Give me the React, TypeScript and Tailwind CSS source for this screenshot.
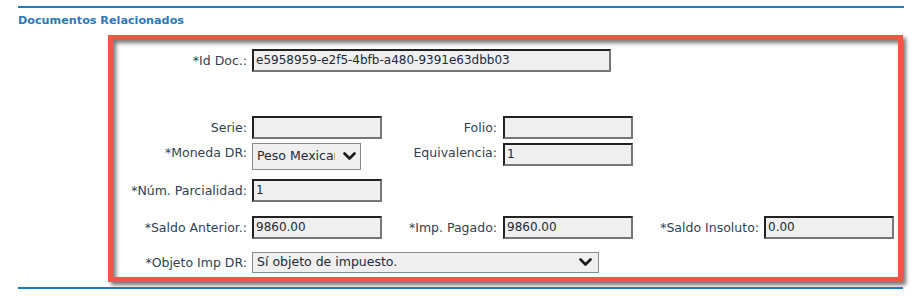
import React from "react";

const Label = ({ children, pr = "pr-[5px]" }: { children: React.ReactNode; pr?: string }) => (
  <div className={`text-right ${pr} text-[12.5px] leading-[14px] text-[#2f3f52] whitespace-nowrap`}>{children}</div>
);

const Input = ({ value = "", w = "w-[130px]" }: { value?: string; w?: string }) => (
  <div
    className={`${w} h-[23px] bg-[#efefef] border-2 border-t-[#222] border-l-[#222] border-r-[#767676] border-b-[#767676] text-[12px] leading-[19px] text-[#1d2a38] pl-[2px] whitespace-nowrap overflow-hidden`}
  >
    {value}
  </div>
);

const Chevron = () => (
  <svg width="13" height="9" viewBox="0 0 13 9" className="shrink-0">
    <polyline points="1.5,1.5 6.5,6.5 11.5,1.5" fill="none" stroke="#1a1a1a" strokeWidth="2.6" strokeLinecap="round" strokeLinejoin="round" />
  </svg>
);

const COLS = "grid grid-cols-[139px_130px_121px_130px_131px_130px] items-center";

export default function App() {
  return (
    <div className="w-[921px] h-[296px] bg-white overflow-hidden font-['DejaVu_Sans',sans-serif]">
      <div className="ml-[18px] w-[886px] pt-[6px]">
        <div className="h-[2px] bg-[#1a7cc1]" />
        <div className="mt-[6px] text-[11.2px] font-bold leading-[14px] text-[#2a7ab6]">Documentos Relacionados</div>
      </div>

      <div className="ml-[108px] mt-[7px] w-[795px] h-[247px] border-[5px] border-[#f25544] shadow-[3px_3px_4px_rgba(0,0,0,0.55),inset_3px_3px_4px_rgba(0,0,0,0.55)] flex flex-col pt-[9px]">
        {/* Id Doc */}
        <div className={COLS}>
          <Label>*Id Doc.:</Label>
          <div className="col-span-3">
            <Input value="e5958959-e2f5-4bfb-a480-9391e63dbb03" w="w-[359px]" />
          </div>
        </div>

        {/* Serie / Folio */}
        <div className={`${COLS} mt-[44px]`}>
          <Label>Serie:</Label>
          <Input />
          <Label pr="pr-[6px]">Folio:</Label>
          <Input />
        </div>

        {/* Moneda / Equivalencia */}
        <div className={`${COLS} mt-[4px] !items-start`}>
          <div className="pt-[3px]">
            <Label>*Moneda DR:</Label>
          </div>
          <div className="w-[109px] h-[27px] bg-[#efefef] border border-[#8a8a8a] flex items-center pl-[4px] pr-[3px]">
            <div className="w-[78px] overflow-hidden whitespace-nowrap text-[12.5px] text-[#1d2a38]">Peso Mexicano</div>
            <div className="ml-auto mr-[1px]">
              <Chevron />
            </div>
          </div>
          <div className="pt-[3px]">
            <Label pr="pr-[6px]">Equivalencia:</Label>
          </div>
          <Input value="1" />
        </div>

        {/* Parcialidad */}
        <div className={`${COLS} mt-[9px]`}>
          <Label>*Núm. Parcialidad:</Label>
          <Input value="1" />
        </div>

        {/* Saldos */}
        <div className={`${COLS} mt-[14px]`}>
          <Label>*Saldo Anterior.:</Label>
          <Input value="9860.00" />
          <Label pr="pr-[6px]">*Imp. Pagado:</Label>
          <Input value="9860.00" />
          <Label>*Saldo Insoluto:</Label>
          <Input value="0.00" />
        </div>

        {/* Objeto Imp */}
        <div className={`${COLS} mt-[13px]`}>
          <Label>*Objeto Imp DR:</Label>
          <div className="col-span-3">
            <div className="w-[347px] h-[21px] bg-[#efefef] border border-[#8a8a8a] flex items-center pl-[4px] pr-[6px]">
              <span className="text-[12.5px] text-[#1d2a38] whitespace-nowrap">Sí objeto de impuesto.</span>
              <div className="ml-auto">
                <Chevron />
              </div>
            </div>
          </div>
        </div>
      </div>

      <div className="ml-[18px] mt-[5px] w-[885px] h-[2px] bg-[#1a7cc1]" />
    </div>
  );
}
